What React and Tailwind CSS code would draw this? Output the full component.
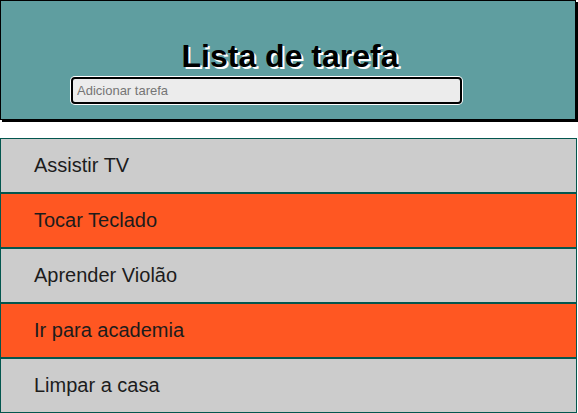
import React from "react";

const tasks = [
  { t: "Assistir TV", odd: false },
  { t: "Tocar Teclado", odd: true },
  { t: "Aprender Violão", odd: false },
  { t: "Ir para academia", odd: true },
  { t: "Limpar a casa", odd: false },
];

export default function App() {
  return (
    <div className="w-[578px] h-[413px] overflow-hidden bg-white" style={{ fontFamily: '"Liberation Sans", Arial, sans-serif' }}>
      <header className="w-[576px] h-[120px] border border-black bg-[#5f9ea0] shadow-[2px_2px_0_#000] flex flex-col pt-[37px]">
        <h1 className="pl-[4px] text-[32px] leading-[37px] font-bold text-black text-center [text-shadow:2px_2px_0_#fff]">
          Lista de tarefa
        </h1>
        <input
          className="ml-[70px] mt-[2px] w-[391px] h-[27px] border-2 border-black rounded-[4px] bg-[#ececec] shadow-[0_0_0_1px_#fff] px-[4px] text-[13px] text-black placeholder:text-[#757575] outline-none"
          placeholder="Adicionar tarefa"
        />
      </header>
      <ul className="mt-[18px] w-[577px]">
        {tasks.map((x) => (
          <li
            key={x.t}
            className={`h-[55px] border border-[#03564e] flex items-center pl-[33px] pb-[1px] text-[20px] text-[#1c1c1c] ${x.odd ? "bg-[#ff5722]" : "bg-[#cccccc]"}`}
          >
            {x.t}
          </li>
        ))}
      </ul>
    </div>
  );
}
